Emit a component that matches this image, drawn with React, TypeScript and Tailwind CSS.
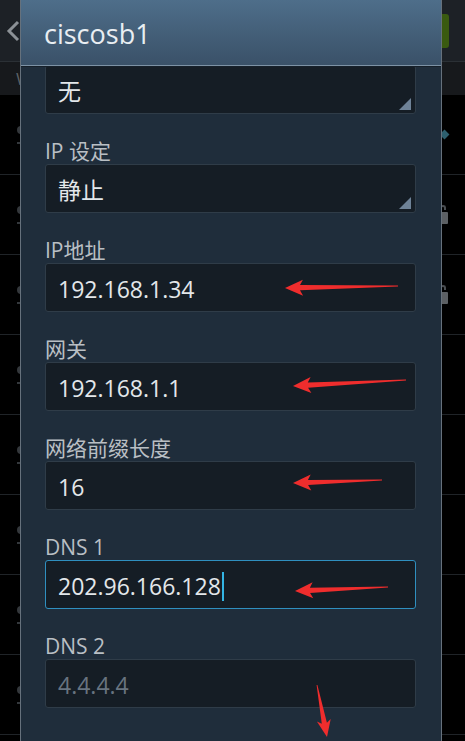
import React from 'react'

const font = { fontFamily: '"Open Sans", "Noto Sans CJK SC", sans-serif' }

type Field = {
    label?: string
    value: string
    spinner?: boolean
    focused?: boolean
    hint?: boolean
}

const fields: Field[] = [
    { value: '无', spinner: true },
    { label: 'IP 设定', value: '静止', spinner: true },
    { label: 'IP地址', value: '192.168.1.34' },
    { label: '网关', value: '192.168.1.1' },
    { label: '网络前缀长度', value: '16' },
    { label: 'DNS 1', value: '202.96.166.128', focused: true },
    { label: 'DNS 2', value: '4.4.4.4', hint: true },
]

function arrowPoints(tx: number, ty: number, sx: number, sy: number, head = 18, half = 8) {
    const len = Math.hypot(sx - tx, sy - ty)
    const ux = (sx - tx) / len
    const uy = (sy - ty) / len
    const nx = -uy
    const ny = ux
    const bx = tx + ux * head
    const by = ty + uy * head
    const jx = tx + ux * (head - 3)
    const jy = ty + uy * (head - 3)
    const pts = [
        [tx, ty],
        [bx + nx * half, by + ny * half],
        [jx + nx * 2.6, jy + ny * 2.6],
        [sx + nx * 0.4, sy + ny * 0.4],
        [sx - nx * 0.4, sy - ny * 0.4],
        [jx - nx * 2.6, jy - ny * 2.6],
        [bx - nx * half, by - ny * half],
    ]
    return pts.map((p) => p.map((v) => v.toFixed(1)).join(',')).join(' ')
}

function Row({ lock, dot }: { lock?: boolean; dot?: boolean }) {
    return (
        <div className="flex h-[80px] shrink-0 items-center justify-between border-b border-[#202428] pl-[17px] pr-[17px]">
            <div className="flex flex-col gap-[8px]">
                <div className="h-[8px] w-[5px] rounded-l-full bg-[#34383c]" />
                <div className="h-[2px] w-[5px] bg-[#34383c]" />
            </div>
            <div className="flex flex-col items-center gap-[2px]">
                {dot && <div className="h-[7px] w-[7px] rotate-45 bg-[#2d5f6e]" />}
                {lock && (
                    <>
                        <div className="h-[5px] w-[6px] rounded-t-full border-2 border-b-0 border-[#4a4e52]" />
                        <div className="h-[12px] w-[10px] rounded-[1px] bg-[#5c6064]" />
                    </>
                )}
            </div>
        </div>
    )
}

function FieldBox({ f }: { f: Field }) {
    return (
        <div
            className={`relative flex h-[49px] items-center rounded-[3px] border bg-[#151d25] pl-[12px] pt-[3px] ${
                f.focused ? 'border-[#2f8fbf]' : 'border-[#2f3c48]'
            }`}
        >
            <span className={`text-[23px] leading-none ${f.hint ? 'text-[#687480]' : 'text-[#e3e7ea]'}`}>{f.value}</span>
            {f.focused && <span className="ml-[1px] h-[29px] w-[2px] bg-[#33b5e5]" />}
            {f.spinner && (
                <svg className="absolute bottom-[3px] right-[4px]" width="12" height="12" viewBox="0 0 12 12">
                    <polygon points="12,0 12,12 0,12" fill="#6e8297" />
                </svg>
            )}
        </div>
    )
}

export default function App() {
    return (
        <div className="relative h-[741px] w-[465px] overflow-hidden bg-black" style={font}>
            {/* screen behind the dialog */}
            <div className="flex h-full flex-col">
                <div className="flex h-[62px] shrink-0 items-center border-b border-[#2b3035] bg-[#1d2126] pl-[6px]">
                    <svg width="14" height="22" viewBox="0 0 14 22">
                        <polyline points="12,2 3,11 12,20" fill="none" stroke="#8c9196" strokeWidth="3" />
                    </svg>
                    <div className="ml-auto mr-[16px] h-[34px] w-[24px] rounded-[3px] bg-[#3a5a10]" />
                </div>
                <div className="flex h-[33px] shrink-0 items-center bg-[#17191c] pl-[16px] text-[17px] text-[#5c6166]">W</div>
                <Row dot />
                <Row lock />
                <Row lock />
                <Row />
                <Row />
                <Row />
                <Row />
                <Row />
            </div>

            {/* dialog */}
            <div className="absolute left-[20px] top-0 flex h-[760px] w-[422px] flex-col border-x border-[#66717c] bg-[#1f2d3b]">
                <div className="flex h-[65px] shrink-0 items-center bg-gradient-to-b from-[#4e6e8a] to-[#3a5168] pl-[23px] pt-[3px]">
                    <span className="text-[27px] text-[#e9eef2]">ciscosb1</span>
                </div>
                <div className="h-[1px] bg-[#7d92a5]" />
                <div className="h-[1px] bg-[#16202a]" />
                <div className="flex flex-1 flex-col overflow-hidden pl-[24px] pr-[25px]">
                    <div className="-mt-[2px] flex flex-col">
                        {fields.map((f, i) => (
                            <div key={i} className="flex flex-col">
                                {f.label && (
                                    <div className="flex h-[50px] items-end pb-[2px] text-[21px] leading-[21px] text-[#b9bfc4]">
                                        {f.label}
                                    </div>
                                )}
                                <FieldBox f={f} />
                            </div>
                        ))}
                    </div>
                </div>
            </div>

            {/* red annotation arrows */}
            <svg className="pointer-events-none absolute inset-0" width="465" height="741">
                <polygon points={arrowPoints(285, 288, 398, 286)} fill="#ef2d2d" />
                <polygon points={arrowPoints(293, 386, 406, 380)} fill="#ef2d2d" />
                <polygon points={arrowPoints(293, 483, 382, 480)} fill="#ef2d2d" />
                <polygon points={arrowPoints(295, 591, 388, 587)} fill="#ef2d2d" />
                <polygon points={arrowPoints(327, 737, 317, 685, 17, 7)} fill="#ef2d2d" />
            </svg>
        </div>
    )
}
